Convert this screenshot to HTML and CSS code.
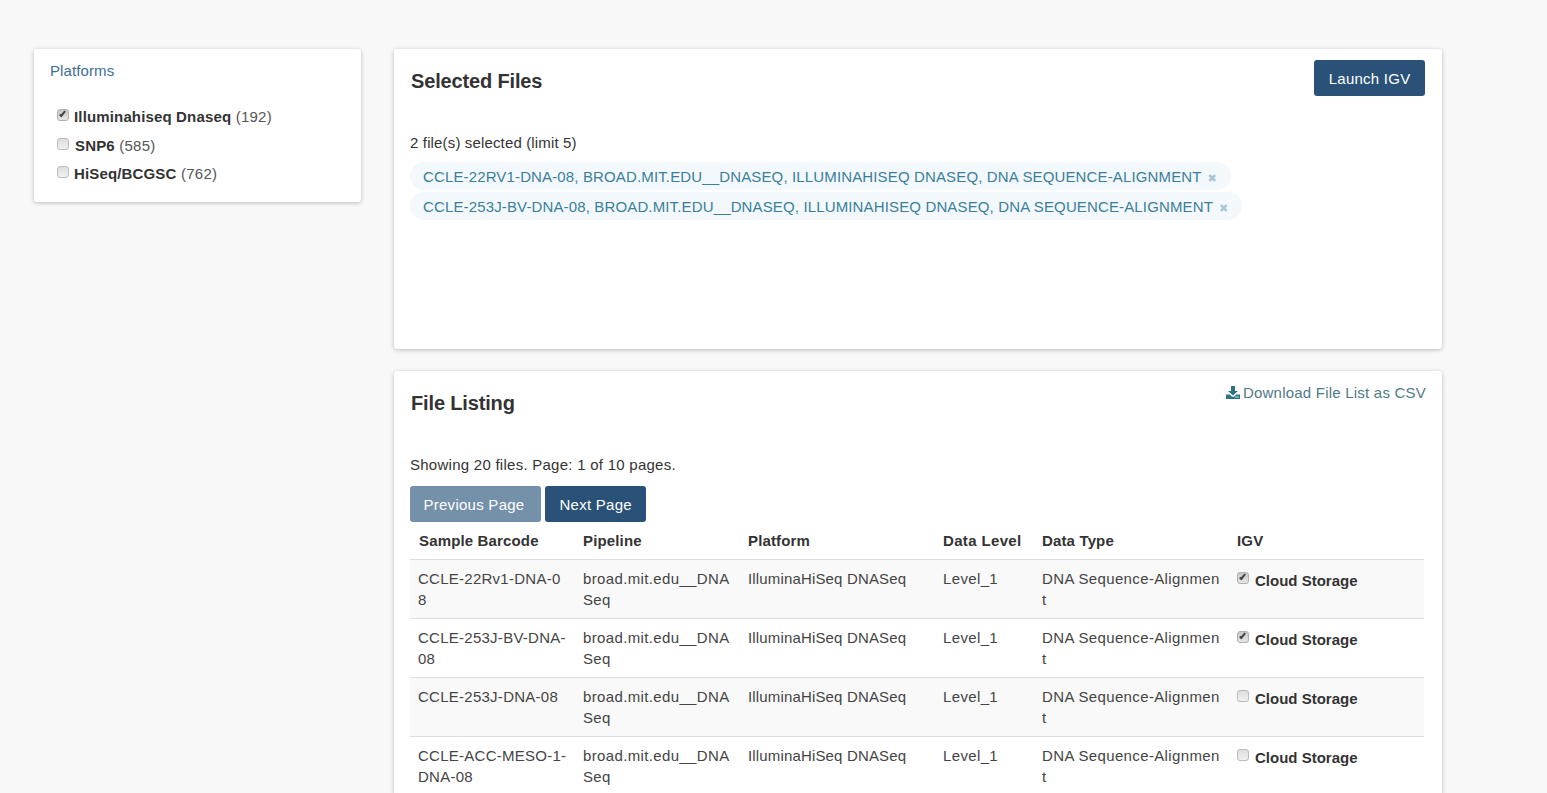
FILE: index.html
```html
<!DOCTYPE html>
<html lang="en">
<head>
    <meta charset="UTF-8">
    <meta name="viewport" content="width=device-width, initial-scale=1.0">
    <title>File Browser</title>
    <link rel="stylesheet" href="styles.css">
</head>
<body>
    <div class="layout">
        <aside class="sidebar">
            <div class="panel filter-panel">
                <a class="filter-title" href="#">Platforms</a>
                <ul class="filter-list">
                    <li><input type="checkbox" checked><span><b>Illuminahiseq Dnaseq</b> (192)</span></li>
                    <li><input type="checkbox"><span class="nudge"><b>SNP6</b> (585)</span></li>
                    <li><input type="checkbox"><span><b>HiSeq/BCGSC</b> (762)</span></li>
                </ul>
            </div>
        </aside>

        <main class="content">
            <section class="panel selected-panel">
                <div class="panel-head">
                    <h2>Selected Files</h2>
                    <button class="btn" type="button">Launch IGV</button>
                </div>
                <p class="selected-count">2 file(s) selected (limit 5)</p>
                <div class="tokens">
                    <span class="token">CCLE-22RV1-DNA-08, BROAD.MIT.EDU__DNASEQ, ILLUMINAHISEQ DNASEQ, DNA SEQUENCE-ALIGNMENT<i class="token-x">✖</i></span>
                    <span class="token">CCLE-253J-BV-DNA-08, BROAD.MIT.EDU__DNASEQ, ILLUMINAHISEQ DNASEQ, DNA SEQUENCE-ALIGNMENT<i class="token-x">✖</i></span>
                </div>
            </section>

            <section class="panel listing-panel">
                <div class="panel-head">
                    <h2>File Listing</h2>
                    <a class="download" href="#">
                        <svg viewBox="0 0 14 13" width="14" height="13"><path d="M5 0h4v5h3L7 9.6 2 5h3z"/><path d="M0 8.4h3.6L6 10.8h2l2.4-2.4H14V13H0zm10.6 2.6a.7.7 0 1 0 0 .01zm2 0a.7.7 0 1 0 0 .01z" fill-rule="evenodd"/></svg>
                        Download File List as CSV
                    </a>
                </div>
                <p class="showing">Showing 20 files. Page: 1 of 10 pages.</p>
                <div class="pager">
                    <button class="btn btn-disabled" type="button">Previous Page</button>
                    <button class="btn" type="button">Next Page</button>
                </div>
                <table class="files">
                    <thead>
                        <tr>
                            <th>Sample Barcode</th>
                            <th>Pipeline</th>
                            <th>Platform</th>
                            <th>Data Level</th>
                            <th>Data Type</th>
                            <th>IGV</th>
                        </tr>
                    </thead>
                    <tbody>
                        <tr>
                            <td>CCLE-22Rv1-DNA-08</td>
                            <td>broad.mit.edu__DNASeq</td>
                            <td>IlluminaHiSeq DNASeq</td>
                            <td>Level_1</td>
                            <td>DNA Sequence-Alignment</td>
                            <td><label class="igv"><input type="checkbox" checked><b>Cloud Storage</b></label></td>
                        </tr>
                        <tr>
                            <td>CCLE-253J-BV-DNA-08</td>
                            <td>broad.mit.edu__DNASeq</td>
                            <td>IlluminaHiSeq DNASeq</td>
                            <td>Level_1</td>
                            <td>DNA Sequence-Alignment</td>
                            <td><label class="igv"><input type="checkbox" checked><b>Cloud Storage</b></label></td>
                        </tr>
                        <tr>
                            <td>CCLE-253J-DNA-08</td>
                            <td>broad.mit.edu__DNASeq</td>
                            <td>IlluminaHiSeq DNASeq</td>
                            <td>Level_1</td>
                            <td>DNA Sequence-Alignment</td>
                            <td><label class="igv"><input type="checkbox"><b>Cloud Storage</b></label></td>
                        </tr>
                        <tr>
                            <td>CCLE-ACC-MESO-1-DNA-08</td>
                            <td>broad.mit.edu__DNASeq</td>
                            <td>IlluminaHiSeq DNASeq</td>
                            <td>Level_1</td>
                            <td>DNA Sequence-Alignment</td>
                            <td><label class="igv"><input type="checkbox"><b>Cloud Storage</b></label></td>
                        </tr>
                    </tbody>
                </table>
            </section>
        </main>
    </div>
</body>
</html>
```

FILE: styles.css
```css
/* General Styles */
html, body {
    height: 100%;
    overflow: hidden;
}

body {
    margin: 0;
    background: #f8f8f8;
    color: #333;
    font-family: 'Liberation Sans', Arial, sans-serif;
    font-size: 15px;
    line-height: 20px;
    letter-spacing: 0.26px;
}

b, th {
    letter-spacing: 0.15px;
}

.layout {
    display: flex;
    align-items: flex-start;
    gap: 33px;
    padding: 49px 0 0 34px;
}

.sidebar {
    width: 327px;
    flex: none;
}

.content {
    width: 1048px;
    flex: none;
}

.panel {
    background: #fff;
    border-radius: 3px;
    box-shadow: 0 1px 4px rgba(0, 0, 0, 0.25);
}

/* Sidebar */
.filter-panel {
    height: 153px;
    padding: 12px 16px 0;
    box-sizing: border-box;
}

.filter-title {
    color: #3b6f96;
    letter-spacing: 0.1px;
    text-decoration: none;
}

.filter-list {
    list-style: none;
    margin: 21px 0 0;
    padding: 0 0 0 6px;
}

.filter-list li {
    display: flex;
    align-items: flex-start;
    height: 28.5px;
    line-height: 30px;
    color: #555;
}

.filter-list b {
    color: #333;
}

.filter-list .nudge {
    margin-left: 1px;
}

input[type="checkbox"] {
    appearance: none;
    position: relative;
    flex: none;
    box-sizing: border-box;
    width: 12px;
    height: 12px;
    margin: 7px 5px 0 1px;
    background: linear-gradient(#dedede, #f0f0f0);
    border: 1px solid #bbb;
    border-radius: 3px;
}

input[type="checkbox"]:checked {
    background: linear-gradient(#c8c8c8, #e6e6e6);
    border-color: #b0b0b0;
}

input[type="checkbox"]:checked::after {
    content: '';
    position: absolute;
    top: 0;
    left: 3px;
    width: 3px;
    height: 7px;
    border: solid #444;
    border-width: 0 2px 2px 0;
    box-sizing: border-box;
    transform: rotate(40deg);
}

/* Panels */
.selected-panel {
    height: 300px;
    padding: 11px 17px 0 16px;
    box-sizing: border-box;
    margin-bottom: 22px;
}

.listing-panel {
    padding: 11px 17px 0 16px;
}

.panel-head {
    display: flex;
    justify-content: space-between;
    align-items: flex-start;
}

h2 {
    margin: 9px 0 0 1px;
    font-size: 20px;
    font-weight: bold;
    line-height: 24px;
    letter-spacing: -0.15px;
    color: #333;
}

.btn {
    height: 36px;
    padding: 2px 14.5px 0;
    background: #2a5278;
    border: none;
    border-radius: 3px;
    color: #fff;
    font: inherit;
    letter-spacing: 0.26px;
}

.btn-disabled {
    padding: 2px 16.5px 0 13.5px;
    background: #7590a9;
}

.selected-count {
    margin: 37px 0 0;
    letter-spacing: 0.15px;
}

.tokens {
    margin-top: 9px;
}

.token {
    display: table;
    line-height: 26px;
    margin-bottom: 2px;
    padding: 2px 14px 0 13px;
    background: #f3f8fd;
    border-radius: 14px;
    color: #3a7f9a;
    letter-spacing: 0.14px;
    white-space: nowrap;
}

.token-x {
    margin-left: 6px;
    color: #a9c6d3;
    font-family: 'DejaVu Sans', sans-serif;
    font-size: 11px;
    line-height: 1;
    font-style: normal;
}

.download {
    margin: 1px -1px 0 0;
    color: #4f7a88;
    letter-spacing: 0.22px;
    text-decoration: none;
}

.download svg {
    margin-right: -1px;
    fill: #2d7386;
    vertical-align: -1px;
}

.showing {
    margin: 40px 0 0;
}

.pager {
    display: flex;
    gap: 4px;
    margin-top: 11px;
}

/* Table */
.files {
    width: 1014px;
    table-layout: fixed;
    border-collapse: collapse;
}

.files th {
    padding: 8px 9px;
    height: 21px;
    text-align: left;
    border-bottom: 1px solid #ddd;
}

.files th:nth-child(1) { width: 146px; }
.files th:nth-child(2) { width: 147px; }
.files th:nth-child(3) { width: 177px; }
.files th:nth-child(4) { width: 81px; letter-spacing: 0.35px; }
.files th:nth-child(5) { width: 177px; }

.files td {
    padding: 8px;
    line-height: 21px;
    vertical-align: top;
    word-break: break-all;
    color: #444;
    letter-spacing: 0.36px;
    border-bottom: 1px solid #ddd;
}

.files td + td {
    padding-left: 9px;
}

.files td:nth-child(1) {
    padding-right: 6px;
    letter-spacing: 0.26px;
}

.files td:nth-child(3) {
    letter-spacing: 0.16px;
}

.files td:nth-child(5) {
    padding-right: 6px;
}

.files tbody tr:nth-child(odd) {
    background: #f9f9f9;
}

.igv {
    display: flex;
    align-items: flex-start;
    word-break: normal;
}

.igv input[type="checkbox"] {
    margin: 4px 6px 0 0;
}

.igv b {
    color: #333;
    letter-spacing: 0;
    position: relative;
    top: 2px;
}
```
